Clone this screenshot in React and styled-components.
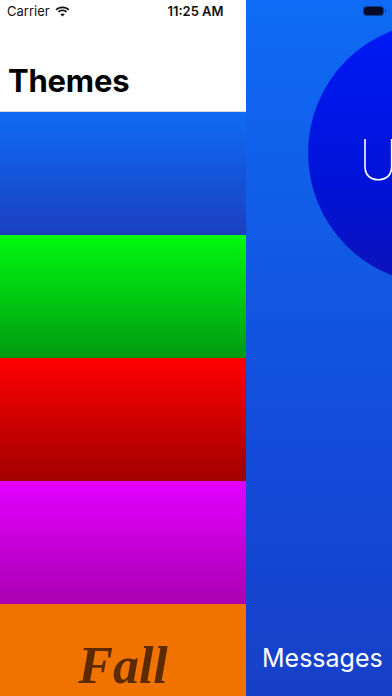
import React from "react";
import styled, { createGlobalStyle } from "styled-components";

const GlobalStyle = createGlobalStyle`
    html, body {
        margin: 0;
        padding: 0;
        width: 392px;
        height: 696px;
        overflow: hidden;
    }
    body {
        font-family: Inter, "Liberation Sans", sans-serif;
    }
`;

const Screen = styled('div')`
    position: relative;
    display: flex;
    width: 392px;
    height: 696px;
    overflow: hidden;
`;

const StatusBar = styled('div')`
    position: absolute;
    top: 0;
    left: 0;
    right: 0;
    height: 22px;
    display: grid;
    grid-template-columns: 1fr auto 1fr;
    align-items: center;
    padding: 0 8px 0 7px;
    font-size: 13px;
    color: #111;
`;

const Carrier = styled('div')`
    display: flex;
    align-items: center;
    gap: 5px;
`;

const Time = styled('div')`
    font-weight: 600;
`;

const Battery = styled('div')`
    justify-self: end;
    width: 19px;
    height: 8px;
    border-radius: 3px;
    background: #050b26;
    box-shadow: 0 0 0 1px rgba(5, 11, 38, 0.5);
    margin-right: 1px;
    position: relative;
    &::after {
        content: "";
        position: absolute;
        right: -3px;
        top: 2px;
        width: 1.5px;
        height: 4px;
        border-radius: 0 1px 1px 0;
        background: rgba(5, 11, 38, 0.5);
    }
`;

const Sidebar = styled('div')`
    width: 246px;
    flex-shrink: 0;
    display: flex;
    flex-direction: column;
`;

const Header = styled('div')`
    height: 112px;
    flex-shrink: 0;
    background: #fff;
    border-bottom: 1px solid #d8d8dc;
    display: flex;
    align-items: flex-end;
    padding: 0 8px 12px;
    box-sizing: border-box;
`;

const Title = styled('h1')`
    margin: 0;
    font-size: 31px;
    font-weight: 700;
    letter-spacing: -0.2px;
    color: #000;
`;

const Tile = styled('div')`
    height: 123px;
    flex-shrink: 0;
    background: ${p => p.$bg};
    display: flex;
    align-items: center;
    justify-content: center;
`;

const FallLabel = styled('span')`
    font-family: "Liberation Serif", serif;
    font-style: italic;
    font-weight: 700;
    font-size: 52px;
    color: #5c2a00;
`;

const Panel = styled('div')`
    flex: 1;
    min-width: 0;
    display: flex;
    flex-direction: column;
    align-items: flex-start;
    justify-content: space-between;
    background: linear-gradient(180deg, #0f6bf5 0%, #1349d6 70%, #1740c8 100%);
    overflow: hidden;
`;

const Circle = styled('div')`
    flex: none;
    width: 262px;
    min-width: 262px;
    height: 262px;
    border-radius: 50%;
    margin: 22px 0 0 62px;
    background: linear-gradient(180deg, #001af7 0%, #0013d8 60%, #0c13b8 100%);
    display: flex;
    align-items: center;
    color: #fff;
    font-family: Roboto, Lato, sans-serif;
    font-weight: 100;
    font-size: 58px;
    line-height: 1;
    padding: 14px 0 0 51px;
    box-sizing: border-box;
`;

const Caption = styled('div')`
    color: #fff;
    font-size: 25px;
    padding: 0 0 23px 16px;
`;

const Wifi = () => (
    <svg width="15" height="11" viewBox="0 0 15 11">
        <path d="M7.5 2.2c2.2 0 4.2.8 5.7 2.2l1.2-1.2C12.6 1.5 10.2.5 7.5.5S2.4 1.5.6 3.2l1.2 1.2c1.5-1.4 3.5-2.2 5.7-2.2z" fill="#111" />
        <path d="M7.5 5.3c1.3 0 2.5.5 3.4 1.3l1.2-1.2C10.9 4.3 9.3 3.6 7.5 3.6S4.1 4.3 2.9 5.4l1.2 1.2c.9-.8 2.1-1.3 3.4-1.3z" fill="#111" />
        <path d="M7.5 10.5l2.2-2.2c-.6-.5-1.4-.9-2.2-.9s-1.6.4-2.2.9z" fill="#111" />
    </svg>
);

const themes = [
    "linear-gradient(180deg, #0f6bf5 0%, #1a40bf 100%)",
    "linear-gradient(180deg, #00f90f 0%, #009a12 100%)",
    "linear-gradient(180deg, #ff0000 0%, #a00000 100%)",
    "linear-gradient(180deg, #e400ff 0%, #a900b2 100%)",
];

const App = () => (
    <>
        <GlobalStyle />
        <Screen>
            <Sidebar>
                <Header>
                    <Title>Themes</Title>
                </Header>
                {themes.map(bg => <Tile key={bg} $bg={bg} />)}
                <Tile $bg="#f07300">
                    <FallLabel>Fall</FallLabel>
                </Tile>
            </Sidebar>
            <Panel>
                <Circle>U</Circle>
                <Caption>Messages</Caption>
            </Panel>
            <StatusBar>
                <Carrier>Carrier <Wifi /></Carrier>
                <Time>11:25 AM</Time>
                <Battery />
            </StatusBar>
        </Screen>
    </>
);

export default App;
